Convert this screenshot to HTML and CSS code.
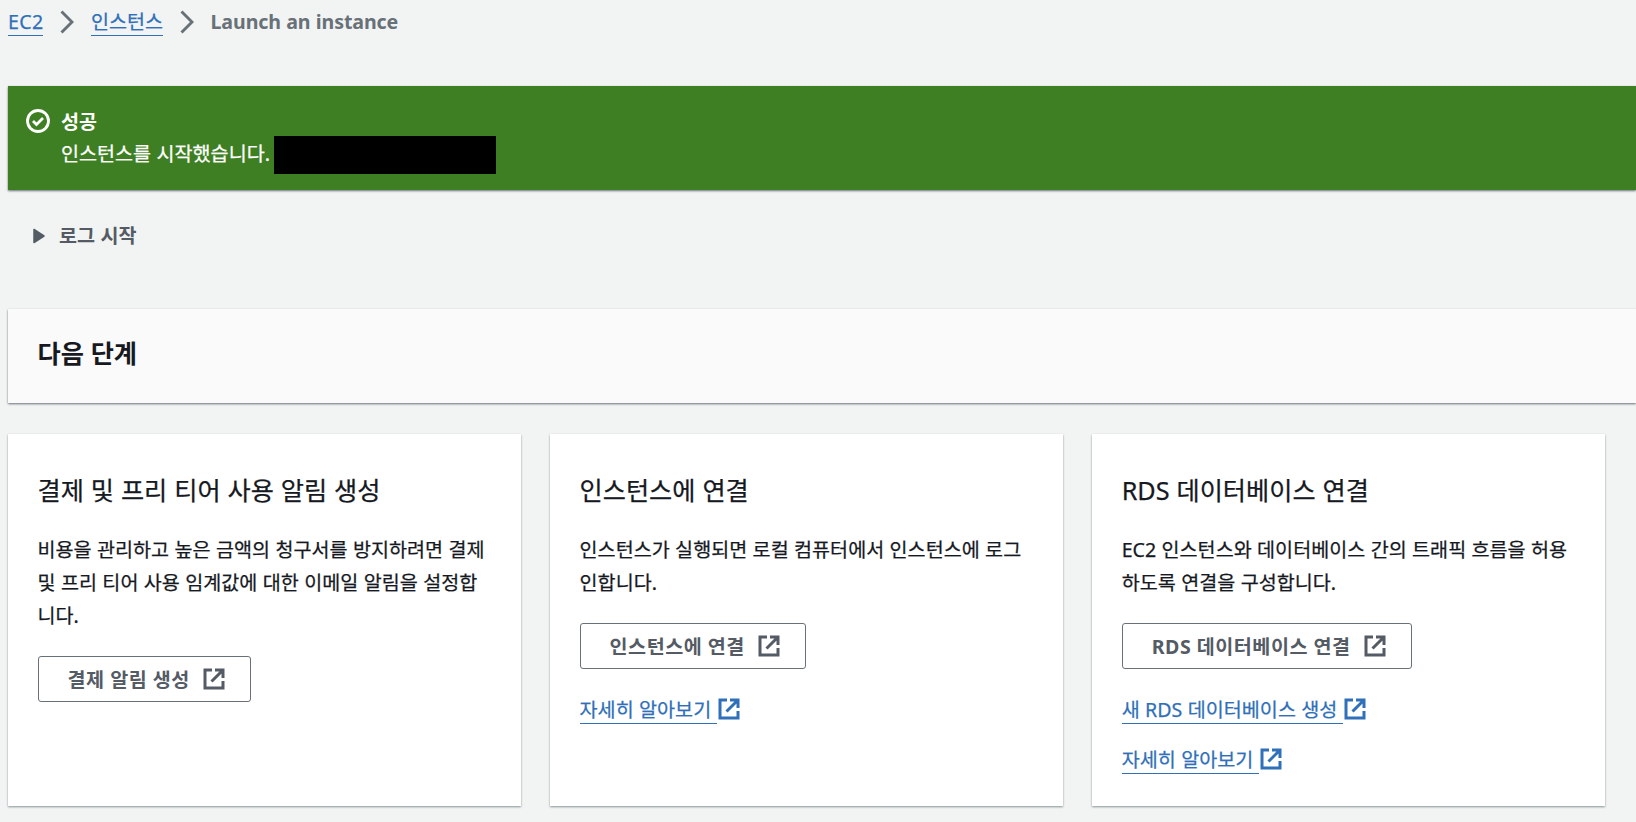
FILE: index.html
```html
<!DOCTYPE html>
<html lang="ko">
<head>
    <meta charset="UTF-8">
    <meta name="viewport" content="width=device-width, initial-scale=1.0">
    <title>Launch an instance</title>
    <link rel="stylesheet" href="styles.css">
</head>
<body>

    <!-- shared icons -->
    <svg class="sprite">
        <symbol id="icon-external" viewBox="0 0 22 22">
            <path d="M9 2H2v18h18v-7M12 2h8v8M20 2L8.5 13.5"/>
        </symbol>
        <symbol id="icon-chevron" viewBox="0 0 14 24">
            <path d="M1.5 1.5L12 12L1.5 22.5"/>
        </symbol>
    </svg>

    <nav class="breadcrumb">
        <a href="#">EC2</a>
        <svg class="chevron"><use href="#icon-chevron"/></svg>
        <a href="#">인스턴스</a>
        <svg class="chevron"><use href="#icon-chevron"/></svg>
        <span class="current">Launch an instance</span>
    </nav>

    <div class="alert">
        <svg class="alert-icon" viewBox="0 0 24 24">
            <circle cx="12" cy="12" r="10.5"/>
            <path d="M7 12l3.5 3.5L17 9"/>
        </svg>
        <div class="alert-text">
            <strong>성공</strong>
            <p>인스턴스를 시작했습니다. <span class="redacted"></span></p>
        </div>
    </div>

    <div class="log-toggle">
        <svg class="caret" viewBox="0 0 12 16"><path d="M1 1.5v13L11 8z"/></svg>
        <span>로그 시작</span>
    </div>

    <div class="section-header">
        <h2>다음 단계</h2>
    </div>

    <div class="cards">
        <div class="card">
            <h3>결제 및 프리 티어 사용 알림 생성</h3>
            <p>비용을 관리하고 높은 금액의 청구서를 방지하려면 결제 및 프리 티어 사용 임계값에 대한 이메일 알림을 설정합니다.</p>
            <button type="button">결제 알림 생성 <svg class="external"><use href="#icon-external"/></svg></button>
        </div>

        <div class="card">
            <h3>인스턴스에 연결</h3>
            <p>인스턴스가 실행되면 로컬 컴퓨터에서 인스턴스에 로그인합니다.</p>
            <button type="button">인스턴스에 연결 <svg class="external"><use href="#icon-external"/></svg></button>
            <div class="link-row">
                <a href="#">자세히 알아보기&nbsp;</a>
                <svg class="external"><use href="#icon-external"/></svg>
            </div>
        </div>

        <div class="card">
            <h3>RDS 데이터베이스 연결</h3>
            <p>EC2 인스턴스와 데이터베이스 간의 트래픽 흐름을 허용하도록 연결을 구성합니다.</p>
            <button type="button">RDS 데이터베이스 연결 <svg class="external"><use href="#icon-external"/></svg></button>
            <div class="link-row">
                <a href="#">새 RDS 데이터베이스 생성&nbsp;</a>
                <svg class="external"><use href="#icon-external"/></svg>
            </div>
            <div class="link-row">
                <a href="#">자세히 알아보기&nbsp;</a>
                <svg class="external"><use href="#icon-external"/></svg>
            </div>
        </div>
    </div>

</body>
</html>
```

FILE: styles.css
```css
* {
    box-sizing: border-box;
}

body {
    margin: 0;
    padding: 5px 0 0 8px;
    height: 822px;
    overflow: hidden;
    background-color: #f2f4f3;
    color: #16191f;
    font-family: "Noto Sans", "Noto Sans CJK KR", sans-serif;
    font-size: 19.6px;
    line-height: 33px;
    word-spacing: 0.3px;
}

h2, h3, p {
    margin: 0;
}

h3, p, a {
    -webkit-text-stroke: 0.25px currentColor;
}

svg {
    fill: none;
    stroke: currentColor;
    flex: none;
}

.sprite {
    display: none;
}

a {
    height: 31px;
    color: #2f70b8;
    text-decoration: none;
    border-bottom: 1px solid #2f70b8;
}

/* Breadcrumb */
.breadcrumb {
    display: flex;
    height: 33px;
    color: #687078;
}

.breadcrumb a:first-child {
    letter-spacing: 0.3px;
}

.chevron {
    width: 14px;
    height: 24px;
    margin: 5px 17px 0 16.5px;
    stroke-width: 2.9;
}

.current {
    font-weight: bold;
    letter-spacing: -0.1px;
}

/* Success message */
.alert {
    display: flex;
    height: 104px;
    margin-top: 48px;
    padding: 19px 18px;
    background-color: #3f7f23;
    color: #fff;
    box-shadow: 0 1px 2px #687078;
}

.alert-icon {
    width: 24px;
    height: 24px;
    margin: 4px 11px 0 0;
    stroke-width: 2.8;
}

.alert-text strong {
    display: block;
    height: 32px;
}

.alert-text p {
    display: flex;
}

.redacted {
    width: 222px;
    height: 38px;
    margin: -1px 0 0 4px;
    background-color: #000;
}

/* Log toggle */
.log-toggle {
    display: flex;
    align-items: center;
    height: 33px;
    margin: 29px 0 0 25px;
    color: #545b64;
    font-weight: bold;
}

.caret {
    width: 12px;
    height: 16px;
    margin-right: 14px;
    fill: currentColor;
    stroke-width: 1.5;
    stroke-linejoin: round;
}

/* Next steps */
.section-header {
    height: 94px;
    margin-top: 57px;
    padding: 27px 29.5px;
    background-color: #fafafa;
    box-shadow: 0 1px 2px #687078;
}

h2, h3 {
    font-size: 25.2px;
    line-height: 34px;
}

h3 {
    margin-bottom: 26px;
    font-weight: normal;
    word-spacing: 0.4px;
}

.cards {
    display: grid;
    grid-template-columns: repeat(3, 1fr);
    gap: 28.8px;
    width: 1597.5px;
    height: 372px;
    margin-top: 31px;
}

.card {
    padding: 39px 29.5px 20px;
    background-color: #fff;
    box-shadow: 0 1px 2px #879596;
}

button {
    display: flex;
    align-items: center;
    gap: 13px;
    height: 46px;
    margin-top: 24px;
    padding: 0 25px 0 29px;
    background-color: #fff;
    border: 1px solid #687078;
    border-radius: 3px;
    color: #545b64;
    font: inherit;
    font-weight: bold;
    letter-spacing: 0.5px;
}

.external {
    width: 22px;
    height: 22px;
    stroke-width: 3;
}

.link-row {
    display: flex;
    height: 33px;
    margin-top: 24px;
    color: #2f70b8;
}

.link-row + .link-row {
    margin-top: 17px;
}

.link-row .external {
    margin: 5px 0 0 1.5px;
}
```
